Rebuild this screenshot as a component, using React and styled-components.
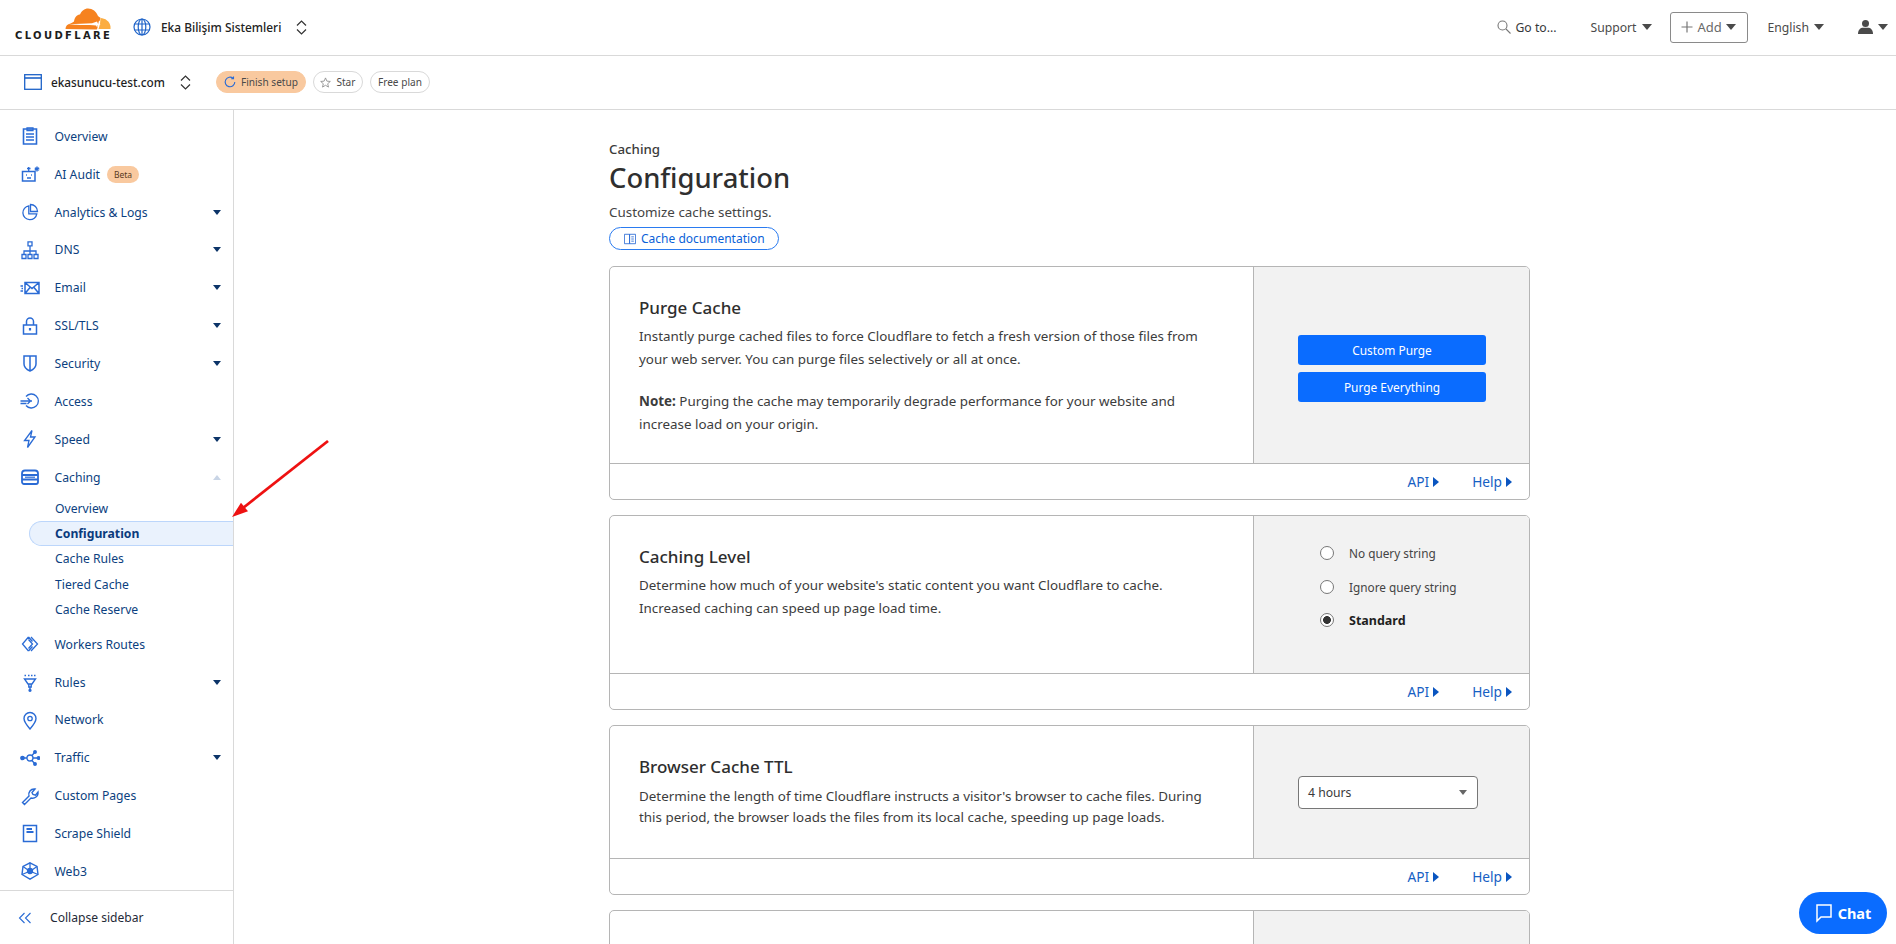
import React from 'react';
import styled, { createGlobalStyle } from 'styled-components';

const Global = createGlobalStyle`
  html, body { margin: 0; padding: 0; height: 944px; overflow: hidden; background: #fff; }
  body { font-family: "Noto Sans", "Open Sans", sans-serif; font-size: 13px; color: #36393a; }
  * { box-sizing: border-box; }
`;

const Page = styled.div`
  position: relative;
  width: 1896px;
  height: 944px;
  overflow: hidden;
  display: flex;
  flex-direction: column;
`;

const TopBar = styled.header`
  height: 56px;
  flex: none;
  display: flex;
  align-items: center;
  border-bottom: 1px solid #d9d9d9;
  padding: 0 8px 1px 15px;
`;
const Logo = styled.div`
  width: 96px;
  height: 34px;
  margin-top: -4px;
  display: flex;
  flex-direction: column;
  align-items: flex-end;
`;
const LogoMark = styled.svg`
  width: 46px;
  height: 22px;
  flex: none;
`;
const LogoWord = styled.div`
  width: 96px;
  font-family: "DejaVu Sans", sans-serif;
  font-weight: 700;
  font-size: 10px;
  line-height: 10px;
  margin-top: 1px;
  letter-spacing: 2.35px;
  color: #1d1d1d;
  white-space: nowrap;
`;
const AccountIcon = styled.svg`
  width: 18px;
  height: 18px;
  margin-left: 22px;
  flex: none;
`;
const AccountName = styled.span`
  margin-left: 10px;
  font-size: 11.9px;
  font-weight: 500;
  color: #222;
  white-space: nowrap;
`;
const UpDown = styled.svg`
  width: 11px;
  height: 15px;
  flex: none;
  margin-left: ${p => p.$gap}px;
`;
const Right = styled.nav`
  margin-left: auto;
  display: flex;
  align-items: center;
  color: #4a4a4a;
  font-size: 12.2px;
`;
const GoTo = styled.span`
  display: flex;
  align-items: center;
  gap: 5px;
  color: #36393a;
  margin-right: 34px;
`;
const MenuLink = styled.span`
  display: flex;
  align-items: center;
  gap: 5px;
  white-space: nowrap;
  margin-right: ${p => p.$mr || 0}px;
`;
const Caret = styled.i`
  display: block;
  width: 0;
  height: 0;
  border-left: 5.5px solid transparent;
  border-right: 5.5px solid transparent;
  border-top: 6px solid #4a4a4a;
`;
const AddButton = styled.span`
  width: 78px;
  height: 31px;
  border: 1px solid #8a8a8a;
  border-radius: 3px;
  display: flex;
  align-items: center;
  justify-content: center;
  gap: 4px;
  margin: 0 20px 0 18px;
  color: #6a6a6a;
  font-size: 13px;
`;
const SubBar = styled.div`
  height: 54px;
  flex: none;
  display: flex;
  align-items: center;
  border-bottom: 1px solid #d9d9d9;
  padding: 0 0 1px 24px;
`;
const DomainName = styled.span`
  margin-left: 9px;
  font-weight: 500;
  font-size: 11.8px;
  color: #1f1f1f;
`;
const Pill = styled.span`
  display: inline-flex;
  align-items: center;
  justify-content: center;
  height: 22px;
  width: ${p => p.$w}px;
  gap: 5px;
  border-radius: 11px;
  font-size: 10.1px;
  color: #4a4a4a;
  margin-right: 7px;
  white-space: nowrap;
  background: ${p => (p.$accent ? '#f9c99f' : '#fff')};
  border: 1px solid ${p => (p.$accent ? '#f9c99f' : '#d9d9d9')};
`;
const PillRow = styled.div`
  display: flex;
  margin-left: 25px;
`;

const Body = styled.div`
  flex: 1;
  min-height: 0;
  display: flex;
`;
const Sidebar = styled.aside`
  width: 234px;
  flex: none;
  border-right: 1px solid #d9d9d9;
  display: flex;
  flex-direction: column;
  padding-top: 7.5px;
`;
const NavRow = styled.div`
  height: 37.85px;
  flex: none;
  display: flex;
  align-items: center;
  padding: 0 12px 0 20px;
  color: #0c3f80;
  font-size: 12.2px;
  line-height: 19px;
  white-space: nowrap;
`;
const NavIcon = styled.svg`
  width: 20px;
  height: 20px;
  flex: none;
  margin-right: 14.5px;
  color: #2a6bd5;
`;
const NavCaret = styled.i`
  display: block;
  margin-left: auto;
  width: 0;
  height: 0;
  border-left: 4px solid transparent;
  border-right: 4px solid transparent;
  border-top: ${p => (p.$up ? '0' : '5px solid #0c3468')};
  border-bottom: ${p => (p.$up ? '5px solid #c9d5e6' : '0')};
`;
const BetaTag = styled.span`
  margin-left: 7px;
  height: 17px;
  padding: 0 7px;
  border-radius: 9px;
  background: #f9c99f;
  color: #5a3a1e;
  font-size: 8.5px;
  display: flex;
  align-items: center;
`;
const SubNav = styled.div`
  margin-bottom: 3.4px;
  flex: none;
`;
const SubRow = styled.div`
  height: 25.2px;
  margin-left: 29px;
  padding-left: ${p => (p.$active ? 25 : 26)}px;
  display: flex;
  align-items: center;
  font-size: 12.2px;
  color: ${p => (p.$active ? '#0a3a7c' : '#0c3f80')};
  font-weight: ${p => (p.$active ? 700 : 400)};
  background: ${p => (p.$active ? '#eaf2fd' : 'transparent')};
  border: ${p => (p.$active ? '1px solid #bcd6fb' : '0')};
  border-right: 0;
  border-radius: 13px 0 0 13px;
`;
const SideFoot = styled.div`
  flex: 1;
  border-top: 1px solid #d9d9d9;
  display: flex;
  align-items: center;
  padding: 0 0 0 18px;
  color: #1f2a38;
  font-size: 12.1px;
`;
const CollapseIcon = styled.svg`
  width: 14px;
  height: 14px;
  margin-right: 18px;
  color: #2a6bd5;
`;

const Main = styled.main`
  flex: 1;
  min-width: 0;
  padding: 30px 0 0 375px;
  overflow: hidden;
`;
const Crumb = styled.div`
  font-size: 13.3px;
  line-height: 18px;
  font-weight: 500;
  color: #3b3b3b;
`;
const Title = styled.h1`
  margin: 1px 0 1px;
  font-size: 27.4px;
  line-height: 38px;
  font-weight: 500;
  color: #2f2f2f;
`;
const Lead = styled.p`
  margin: 6px 0 0;
  font-size: 13.4px;
  line-height: 18px;
  color: #444;
`;
const DocLink = styled.span`
  display: inline-flex;
  align-items: center;
  gap: 5px;
  height: 23px;
  width: 170px;
  margin-top: 6px;
  padding-left: 14px;
  border: 1px solid #2a7bf0;
  border-radius: 12px;
  font-size: 12px;
  color: #0a5fd8;
`;
const Cards = styled.div`
  margin-top: 16px;
  width: 921px;
  display: flex;
  flex-direction: column;
  gap: 15px;
`;
const Card = styled.section`
  border: 1px solid #b5b5b5;
  border-radius: 5px;
  overflow: hidden;
  flex: none;
`;
const CardTop = styled.div`
  display: flex;
  height: ${p => p.$h}px;
`;
const CardText = styled.div`
  flex: 1;
  padding: 28px 40px 0 29px;
  color: #3b3b3b;
`;
const CardTitle = styled.h2`
  margin: 0;
  font-size: 17px;
  line-height: 26px;
  font-weight: 500;
  color: #2e2e2e;
`;
const CardBody = styled.p`
  margin: ${p => (p.$tight ? 6 : 4)}px 0 0;
  font-size: 13.4px;
  line-height: ${p => (p.$tight ? 20.5 : 22.5)}px;
  color: #3c3c3c;
  & + & { margin-top: 20px; }
`;
const Strong = styled.b`
  font-weight: 700;
`;
const Control = styled.div`
  width: 276px;
  flex: none;
  background: #f2f2f2;
  border-left: 1px solid #b5b5b5;
  display: flex;
  flex-direction: column;
  justify-content: center;
  padding-left: ${p => p.$pl}px;
  padding-top: ${p => p.$pt || 0}px;
  padding-bottom: ${p => p.$pb || 0}px;
`;
const BlueButton = styled.button`
  width: 188px;
  height: 30px;
  border: 0;
  border-radius: 3px;
  background: #0a6cff;
  color: #fff;
  font: 11.9px "Noto Sans", sans-serif;
  padding: 0;
  & + & { margin-top: 7px; }
`;
const RadioRow = styled.label`
  display: flex;
  align-items: center;
  height: 33.5px;
  font-size: ${p => (p.$on ? 12.5 : 11.8)}px;
  color: ${p => (p.$on ? '#1f1f1f' : '#444')};
  font-weight: ${p => (p.$on ? 700 : 400)};
`;
const RadioDot = styled.i`
  width: 14px;
  height: 14px;
  border-radius: 50%;
  border: 1px solid #777;
  background: ${p => (p.$on ? 'radial-gradient(circle, #333 0 3.6px, #fff 4.2px)' : '#fff')};
  margin-right: 15px;
  flex: none;
`;
const Select = styled.div`
  width: 180px;
  height: 33px;
  border: 1px solid #777;
  border-radius: 4px;
  background: #fff;
  display: flex;
  align-items: center;
  justify-content: space-between;
  padding: 0 10px 0 9px;
  font-size: 12.2px;
  color: #3a3a3a;
`;
const SelectCaret = styled.i`
  width: 0;
  height: 0;
  border-left: 4px solid transparent;
  border-right: 4px solid transparent;
  border-top: 5px solid #666;
`;
const CardFoot = styled.div`
  height: 36px;
  border-top: 1px solid #b5b5b5;
  display: flex;
  justify-content: flex-end;
  align-items: center;
  gap: 33px;
  padding-right: 17px;
`;
const FootLink = styled.a`
  display: flex;
  align-items: center;
  gap: 4px;
  font-size: 13.7px;
  color: #1660c4;
`;
const FootArrow = styled.i`
  width: 0;
  height: 0;
  border-top: 5.5px solid transparent;
  border-bottom: 5.5px solid transparent;
  border-left: 6px solid #0a55c0;
`;
const ChatButton = styled.button`
  position: absolute;
  left: 1799px;
  top: 892px;
  width: 88px;
  height: 42px;
  border: 0;
  border-radius: 21px;
  background: #0a6cff;
  color: #fff;
  font: 700 14.5px "Noto Sans", sans-serif;
  display: flex;
  align-items: center;
  justify-content: center;
  gap: 5px;
  padding: 0;
`;
const ArrowOverlay = styled.svg`
  position: absolute;
  left: 225px;
  top: 435px;
  width: 110px;
  height: 90px;
  pointer-events: none;
`;

const UpDownIcon = ({ gap }) => (
  <UpDown $gap={gap} viewBox="0 0 11 15" fill="none" stroke="#333" strokeWidth="1.2">
    <path d="M1 5.5 5.5 1 10 5.5M1 9.5 5.5 14 10 9.5" />
  </UpDown>
);

const I = {
  overview: <><path d="M3.500 3h13v15h-13z" strokeWidth="1.600" /><path d="M7 1.800h6v2.700H7z" fill="currentColor" fillOpacity=".25" /><path d="M6 8h8M6 11h8M6 14h8" strokeWidth="1.500" /></>,
  audit: <><path d="M2.500 7.500h12.500v9.500H2.500z" strokeWidth="1.500" /><path d="M8.700 3v4.500M7 4.500h3.500" /><path d="M6 11h.9M11 11h.9M7 14h4" strokeWidth="1.600" /><path d="M17 2.500v5M14.800 3.800l4.400 2.400M19.200 3.800l-4.400 2.400" strokeWidth="1.400" /></>,
  analytics: <><path d="M8.800 3.800A7 7 0 1 0 16.800 11.800H8.800z" strokeWidth="1.300" /><path d="M10.500 2.500a7 7 0 0 1 7 7h-7z" strokeWidth="1.300" /></>,
  dns: <><path d="M8 1.800h4v4H8zM2 14.500h4v4H2zM8 14.500h4v4H8zM14 14.500h4v4h-4zM10 5.800v8.700M4 14.500v-3.500h12v3.500" /></>,
  email: <><path d="M5 4.500h14v11H5zM5 4.500l7 6 7-6M5 15.500l5-6M19 15.500l-5-6" strokeWidth="1.500" /><path d="M.5 8H3M1.500 10.500H3M.5 13H3" /></>,
  ssl: <><path d="M3.500 9h13v9h-13zM6.500 9V5.500a3.500 3.500 0 0 1 7 0V9" strokeWidth="1.500" /><path d="M10 12v2.500" strokeWidth="2.200" /></>,
  security: <><path d="M4 3h12v8c0 3.500-2.500 5.500-6 7-3.500-1.500-6-3.500-6-7zM10 3v15" strokeWidth="1.500" /></>,
  access: <><path d="M6 5.500a7 7 0 1 1 0 9M.5 10H12M7.500 7 10.500 10l-3 3M.5 12.500h6" /></>,
  speed: <><path d="M12 1.500 4.500 11.500H9l-1.500 7L15 8h-4.500z" /></>,
  caching: <><path d="M5 3.500h10a3 3 0 0 1 3 3V8H2V6.500a3 3 0 0 1 3-3zM2 8h16v4.500H2zM2 12.500h16V15a2 2 0 0 1-2 2H4a2 2 0 0 1-2-2z" strokeWidth="1.800" /><path d="M5 10.200h10" strokeWidth="1.200" /></>,
  workers: <><path d="M8.500 3 2.500 10l6 7M8.500 3l4 4.500M8.500 17l4-4.500M11 3l6.500 7-6.500 7M8.500 5.500 12.500 10l-4 4.500" /></>,
  rules: <><path d="M4.500 7h11l-3.500 5H8zM8.800 12v3h2.400v-3M10 15v4" strokeWidth="1.400" /><path d="M4.500 3.500h1.500M8 3.500h1.500M11 3.500h1.500M14 3.500h1.500" strokeWidth="1.700" /><circle cx="10" cy="18.300" r="1" fill="currentColor" /></>,
  network: <><path d="M10 19c-3-3.500-6-7-6-10.500a6 6 0 0 1 12 0C16 12 13 15.500 10 19z" strokeWidth="1.400" /><circle cx="10" cy="8.500" r="2.200" /></>,
  traffic: <><circle cx="10" cy="10" r="3" /><circle cx="15" cy="4" r="1.300" fill="currentColor" /><circle cx="15" cy="16" r="1.300" fill="currentColor" /><circle cx="18.500" cy="10" r="1.300" fill="currentColor" /><circle cx="2.500" cy="10" r="1.700" fill="currentColor" /><path d="M4 10h3M12 7.500l2.500-3M12 12.500l2.500 3M13 10h4" /></>,
  pages: <><path d="M2.500 16.500 9 10C8 6.500 10.500 2.500 15 3l-3 3.500 1 2 2.500.7L18 6c.5 4.500-3.500 7-7 6l-6.500 6.500z" strokeWidth="1.400" /></>,
  scrape: <><path d="M3.500 2.500h13v16h-13z" strokeWidth="1.500" /><path d="M6.500 6H12M6.500 9h7" strokeWidth="2" /></>,
  web3: <><path d="M10 1.800 17 5.500l1 8-8 4.700-8-4.700 1-8z" strokeWidth="1.400" /><circle cx="10" cy="10" r="2.500" fill="currentColor" /><path d="M10 1.800V7.500M3 5.500 8 9M17 5.500 12 9M2 13.500 8 11M18 13.500 12 11" /></>,
};

const Nav = ({ icon, label, caret, up, children }) => (
  <NavRow>
    <NavIcon viewBox="0 0 20 20" fill="none" stroke="currentColor" strokeWidth="1.300">{I[icon]}</NavIcon>
    {label}
    {children}
    {caret && <NavCaret $up={up} />}
  </NavRow>
);

const Foot = () => (
  <CardFoot>
    <FootLink>API <FootArrow /></FootLink>
    <FootLink>Help <FootArrow /></FootLink>
  </CardFoot>
);

const navTop = [
  ['overview', 'Overview'], ['audit', 'AI Audit', false, 'beta'], ['analytics', 'Analytics & Logs', true],
  ['dns', 'DNS', true], ['email', 'Email', true], ['ssl', 'SSL/TLS', true], ['security', 'Security', true],
  ['access', 'Access'], ['speed', 'Speed', true],
];
const navBottom = [
  ['workers', 'Workers Routes'], ['rules', 'Rules', true], ['network', 'Network'], ['traffic', 'Traffic', true],
  ['pages', 'Custom Pages'], ['scrape', 'Scrape Shield'], ['web3', 'Web3'],
];
const subNav = ['Overview', 'Configuration', 'Cache Rules', 'Tiered Cache', 'Cache Reserve'];

export default function App() {
  return (
    <Page>
      <Global />
      <TopBar>
        <Logo>
          <LogoMark viewBox="0 0 46 22">
            <path fill="#f6821f" d="M0.500 21C.5 18 2.500 16 5.500 15.500 7 14.800 8 14 9 13.500 9.500 9 12.500 6.500 15 6.500 16.500 3 19.500 .5 23 .5c4.500 0 8.500 3 10 7.500.7.800 1.800 1.200 2.500 1.800l-.8 3-1 .7-1.200 6.500-.8 1.500z" />
            <path fill="#fbad41" d="M35.500 10C40 10 45 13.500 45.500 18.500V21H33.500l1.500-5z" />
            <path fill="#fff" d="M4 16.800C12 15.800 20 15.500 27 15.300L32 13.500 33 15.800 36 16 32.800 17 32.300 19.500 31 17.500C24 17.200 14 17.200 4 16.800z" />
          </LogoMark>
          <LogoWord>CLOUDFLARE</LogoWord>
        </Logo>
        <AccountIcon viewBox="0 0 18 18" fill="none" stroke="#1e63c8" strokeWidth="1.200">
          <circle cx="9" cy="9" r="8" />
          <ellipse cx="9" cy="9" rx="3.800" ry="8" />
          <path d="M1.500 6h15M1.500 12h15M9 1v16" />
        </AccountIcon>
        <AccountName>Eka Bilişim Sistemleri</AccountName>
        <UpDownIcon gap={15} />
        <Right>
          <GoTo>
            <svg width="14" height="14" viewBox="0 0 14 14" fill="none" stroke="#777" strokeWidth="1.100">
              <circle cx="5.500" cy="5.500" r="4.500" /><path d="m9 9 4.500 4.500" />
            </svg>
            Go to...
          </GoTo>
          <MenuLink>Support <Caret /></MenuLink>
          <AddButton>
            <svg width="12" height="12" viewBox="0 0 12 12" stroke="#777" strokeWidth="1.200"><path d="M6 .5v11M.5 6h11" /></svg>
            Add <Caret />
          </AddButton>
          <MenuLink $mr={34}>English <Caret /></MenuLink>
          <MenuLink>
            <svg width="15" height="14" viewBox="0 0 15 14" fill="#4a4a4a">
              <circle cx="7.500" cy="3.500" r="3.500" /><path d="M0 14c0-4 2.500-6 4-6.200h7c1.500.2 4 2.200 4 6.200z" />
            </svg>
            <Caret />
          </MenuLink>
        </Right>
      </TopBar>
      <SubBar>
        <svg width="18" height="16" viewBox="0 0 18 16" fill="none" stroke="#1e63c8" strokeWidth="1.300">
          <rect x=".7" y=".7" width="16.600" height="14.600" /><path d="M.7 4h16.600" strokeWidth="1.600" />
        </svg>
        <DomainName>ekasunucu-test.com</DomainName>
        <UpDownIcon gap={15} />
        <PillRow>
          <Pill $accent $w={90}>
            <svg width="12" height="12" viewBox="0 0 12 12" fill="none" stroke="#2a6bd5" strokeWidth="1.100">
              <path d="M10.800 6a4.800 4.800 0 1 1-1.600-3.600M9.500 .5v2.300H7.200" />
            </svg>
            Finish setup
          </Pill>
          <Pill $w={50}>
            <svg width="11" height="11" viewBox="0 0 24 24" fill="none" stroke="#888" strokeWidth="1.800">
              <path d="m12 2 3 7 7.500.7-5.700 5 1.700 7.300-6.500-3.900L5.500 22l1.700-7.300-5.700-5L9 9z" />
            </svg>
            Star
          </Pill>
          <Pill $w={60}>Free plan</Pill>
        </PillRow>
      </SubBar>
      <Body>
        <Sidebar>
          {navTop.map(([icon, label, caret, tag]) => (
            <Nav key={label} icon={icon} label={label} caret={caret}>
              {tag && <BetaTag>Beta</BetaTag>}
            </Nav>
          ))}
          <Nav icon="caching" label="Caching" caret up />
          <SubNav>
            {subNav.map(s => <SubRow key={s} $active={s === 'Configuration'}>{s}</SubRow>)}
          </SubNav>
          {navBottom.map(([icon, label, caret]) => (
            <Nav key={label} icon={icon} label={label} caret={caret} />
          ))}
          <SideFoot>
            <CollapseIcon viewBox="0 0 14 14" fill="none" stroke="currentColor" strokeWidth="1.100">
              <path d="M6.500 2 1.500 7l5 5M12.500 2l-5 5 5 5" />
            </CollapseIcon>
            Collapse sidebar
          </SideFoot>
        </Sidebar>
        <Main>
          <Crumb>Caching</Crumb>
          <Title>Configuration</Title>
          <Lead>Customize cache settings.</Lead>
          <DocLink>
            <svg width="12" height="12" viewBox="0 0 14 12" fill="none" stroke="#2a6bd5" strokeWidth="1">
              <path d="M.5.5h6v11h-6zM6.500.5h7v11h-7zM8.500 3.500h3M8.500 6h3M8.500 8.500h3" />
            </svg>
            Cache documentation
          </DocLink>
          <Cards>
            <Card>
              <CardTop $h={196}>
                <CardText>
                  <CardTitle>Purge Cache</CardTitle>
                  <CardBody>Instantly purge cached files to force Cloudflare to fetch a fresh version of those files from your web server. You can purge files selectively or all at once.</CardBody>
                  <CardBody><Strong>Note:</Strong> Purging the cache may temporarily degrade performance for your website and increase load on your origin.</CardBody>
                </CardText>
                <Control $pl={44} $pt={7}>
                  <BlueButton>Custom Purge</BlueButton>
                  <BlueButton>Purge Everything</BlueButton>
                </Control>
              </CardTop>
              <Foot />
            </Card>
            <Card>
              <CardTop $h={157}>
                <CardText>
                  <CardTitle>Caching Level</CardTitle>
                  <CardBody>Determine how much of your website's static content you want Cloudflare to cache. Increased caching can speed up page load time.</CardBody>
                </CardText>
                <Control $pl={66} $pb={16}>
                  <RadioRow><RadioDot />No query string</RadioRow>
                  <RadioRow><RadioDot />Ignore query string</RadioRow>
                  <RadioRow $on><RadioDot $on />Standard</RadioRow>
                </Control>
              </CardTop>
              <Foot />
            </Card>
            <Card>
              <CardTop $h={132}>
                <CardText>
                  <CardTitle>Browser Cache TTL</CardTitle>
                  <CardBody $tight>Determine the length of time Cloudflare instructs a visitor's browser to cache files. During this period, the browser loads the files from its local cache, speeding up page loads.</CardBody>
                </CardText>
                <Control $pl={44}>
                  <Select>4 hours<SelectCaret /></Select>
                </Control>
              </CardTop>
              <Foot />
            </Card>
            <Card>
              <CardTop $h={132}>
                <CardText>
                  <CardTitle>Crawler Hints</CardTitle>
                </CardText>
                <Control $pl={44} />
              </CardTop>
            </Card>
          </Cards>
        </Main>
      </Body>
      <ArrowOverlay viewBox="0 0 110 90" fill="none">
        <path d="M103 6 18 73" stroke="#ee1111" strokeWidth="2.800" />
        <path d="M7 82 16 67.700 23 76.300z" fill="#ee1111" />
      </ArrowOverlay>
      <ChatButton>
        <svg width="18" height="20" viewBox="0 0 18 20" fill="none" stroke="#fff" strokeWidth="1.500">
          <path d="M2 2h14v12H6l-4 4z" />
        </svg>
        Chat
      </ChatButton>
    </Page>
  );
}
